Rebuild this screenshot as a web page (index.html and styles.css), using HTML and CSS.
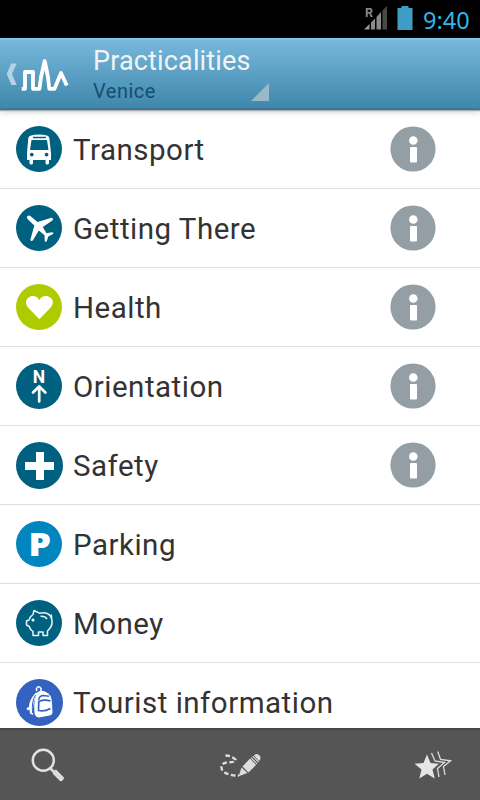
FILE: index.html
```
<!DOCTYPE html>
<html lang="en">
<head>
<meta charset="utf-8">
<title>Practicalities</title>
<link rel="stylesheet" href="styles.css">
</head>
<body>
<div class="screen">
  <div class="status">
    <svg class="signal" width="24" height="24" viewBox="0 0 24 24">
      <path d="M0 23.500L5.500 18V23.500Z" fill="#999"/>
      <path d="M7 16.500L11 12.500V23.500H7ZM12.500 11L17 6V23.500H12.500Z" fill="#8a8a8a"/>
      <path d="M18.500 4.500L23 0V23.500H18.500Z" fill="#484848"/>
      <text x="1" y="11" class="roam">R</text>
    </svg>
    <svg class="battery" width="16" height="24" viewBox="0 0 16 24"><path d="M4.500 0h7v2H15.500v22H.500V2h4z" fill="#3d9dc6"/></svg>
    <span class="clock">9:40</span>
  </div>
  <header class="bar">
    <svg class="logo" width="64" height="44" viewBox="0 0 64 44">
      <path d="M11 11.500H16.700L12 22L16.700 33H11.500L6.700 22Z" fill="#b1d3e5"/>
      <path d="M21.700 36.800H25V20H33V36.800H39.500L41 25L44.700 9L48 25L49.300 36.800H54.500L61 21L66.800 33.500" fill="none" stroke="#fff" stroke-width="3.800" stroke-linejoin="round"/>
    </svg>
    <div class="titles">
      <div class="title">Practicalities</div>
      <div class="subtitle"><span>Venice</span><svg width="18" height="18" viewBox="0 0 18 18"><path d="M18 0V18H0Z" fill="#9ab9c7"/></svg></div>
    </div>
  </header>
  <main class="list">
    <div class="row"><svg class="icon" viewBox="0 0 46 46"><circle cx="23" cy="23" r="23" fill="#006080"/><path fill="#fff" fill-rule="evenodd" d="M15 9.500Q23 7.500 31 9.500Q33 10 33.300 12L35 27V34H33V37Q33 38.500 31.300 38.500T29.500 37V34H17V37Q17 38.500 15.200 38.500T13.500 37V34H11V27L12.300 12Q12.500 10 15 9.500ZM17 10.700V12.200H30V10.700ZM15.500 14L14 24H32.500L31 14ZM15.700 26.700a1.900 1.900 0 1 0 .1 0ZM30.500 26.700a1.900 1.900 0 1 0 .1 0Z"/></svg><span class="label">Transport</span><svg class="info" viewBox="0 0 46 46"><circle cx="23" cy="23" r="22.600"/><circle class="mark" cx="23.300" cy="14.500" r="4.300"/><rect class="mark" x="20" y="21" width="7" height="15.500" rx="1"/></svg></div>
    <div class="row"><svg class="icon" viewBox="0 0 46 46"><circle cx="23" cy="23" r="23" fill="#006080"/><path fill="#fff" d="M11.200 11.200Q13 9.500 15 11.500L21.500 17L35.500 12.700Q37.500 12.800 36.700 15.200L26.800 22L30.500 28.200L36 27.200Q38.200 27.500 37 29L32.300 31.500L30.800 36Q29.300 38 28.700 35.500L28.500 30.300L22.800 25.500L17 35.200Q15.500 36.700 14.300 35L18.300 20.500L11.500 14Q10.500 12.500 11.200 11.200Z"/></svg><span class="label">Getting There</span><svg class="info" viewBox="0 0 46 46"><circle cx="23" cy="23" r="22.600"/><circle class="mark" cx="23.300" cy="14.500" r="4.300"/><rect class="mark" x="20" y="21" width="7" height="15.500" rx="1"/></svg></div>
    <div class="row"><svg class="icon" viewBox="0 0 46 46"><circle cx="23" cy="23" r="23" fill="#aecb00"/><path fill="#fff" d="M23.300 35.200L12 23.500C8.300 19 10 14 14.300 12.500C18 11.300 22 13 23.300 16.200C24.600 13 28.800 11.300 32.300 12.500C37 14 38.500 19 34.700 23.500Z"/></svg><span class="label">Health</span><svg class="info" viewBox="0 0 46 46"><circle cx="23" cy="23" r="22.600"/><circle class="mark" cx="23.300" cy="14.500" r="4.300"/><rect class="mark" x="20" y="21" width="7" height="15.500" rx="1"/></svg></div>
    <div class="row"><svg class="icon" viewBox="0 0 46 46"><circle cx="23" cy="23" r="23" fill="#006080"/><text class="north" x="23" y="19.700" text-anchor="middle">N</text><path d="M17 29.500L23.200 23.500L29.400 29.500M23.200 24V38.500" fill="none" stroke="#fff" stroke-width="2.700" stroke-linecap="round" stroke-linejoin="round"/></svg><span class="label">Orientation</span><svg class="info" viewBox="0 0 46 46"><circle cx="23" cy="23" r="22.600"/><circle class="mark" cx="23.300" cy="14.500" r="4.300"/><rect class="mark" x="20" y="21" width="7" height="15.500" rx="1"/></svg></div>
    <div class="row"><svg class="icon" viewBox="0 0 46 46"><circle cx="23.500" cy="23.500" r="23.500" fill="#006080"/><path fill="#fff" d="M20 10H28V20H38V28H28V38H20V28H9V20H20Z"/></svg><span class="label">Safety</span><svg class="info" viewBox="0 0 46 46"><circle cx="23" cy="23" r="22.600"/><circle class="mark" cx="23.300" cy="14.500" r="4.300"/><rect class="mark" x="20" y="21" width="7" height="15.500" rx="1"/></svg></div>
    <div class="row"><svg class="icon" viewBox="0 0 46 46"><circle cx="23" cy="23" r="23" fill="#0085bf"/><text class="park" x="12.600" y="35" textLength="22.500" lengthAdjust="spacingAndGlyphs">P</text></svg><span class="label">Parking</span></div>
    <div class="row"><svg class="icon" viewBox="0 0 46 46"><circle cx="23" cy="23" r="23" fill="#006080"/><g fill="none" stroke="#e8f5f8" stroke-width="1.500" stroke-linejoin="round"><path d="M18 10.500L23.500 13.200Q32 11.500 35 17Q38.500 25 31.500 31V35.500H27V32H22.500V35.500H17V31.500Q14 29.500 13.200 26.500L10.500 25V21L13 20Q13.500 17 17 14.500Z"/><path d="M24.500 16.200Q29 15.800 31 19M35.500 19Q36 15.500 35 14.500"/></g><circle cx="17" cy="20" r="1.500" fill="#fff"/></svg><span class="label">Money</span></div>
    <div class="row"><svg class="icon" viewBox="0 0 46 46"><circle cx="23.500" cy="23.500" r="23.500" fill="#3462c0"/><path d="M20.500 12V9.500Q22.500 6 25 9.500V12" fill="none" stroke="#fff" stroke-width="1.500"/><path d="M19.500 14Q13 21 13 28L10.500 29L11.500 31.500L13.500 30.500L14 34.500L17 36Q16 21 22.500 13Z" fill="#fff"/><path d="M22 13Q25 11 29 12.500Q35.500 15 36 23.500L36.500 34Q36 36 33.500 36.500L23 38.500Q19 38 18.500 34Q17 20 22 13Z" fill="#fff"/><path d="M22.500 21Q23.500 16.500 27.500 16.500L33 17.300" fill="none" stroke="#3462c0" stroke-width="1.500"/><path d="M34.500 22Q28 20 22.800 22.500L22.500 31.500Q28 33 34.500 29.500" fill="none" stroke="#3462c0" stroke-width="1.700"/><path d="M19.500 16Q15.500 22 16.500 34" fill="none" stroke="#3462c0"/></svg><span class="label">Tourist information</span></div>
  </main>
  <footer class="tools">
    <svg width="34" height="36" viewBox="31 746 34 36"><circle cx="43.300" cy="759.300" r="10.500" fill="none" stroke="#e2e2e2" stroke-width="2.500"/><path d="M50.500 767.500L53.500 770.500" stroke="#ddd" stroke-width="2.600"/><path d="M52.500 770.500L56 768.500L64 776.500Q64 779 60.500 780.500L53 773Z" fill="#ddd"/></svg>
    <svg width="42" height="26" viewBox="219 752 42 26"><path d="M225.500 755.500Q231 755.500 235.500 759.500C236 765 222 759 221.500 767C221 773 231 776 239 775.500" fill="none" stroke="#ddd" stroke-width="2.300" stroke-dasharray="4.500 2.500"/><path d="M238.700 776.300L241.500 767.500L247.500 773ZM242.500 766.500L250 758.500L256 765L248.500 772.500ZM254 755.500Q257 752.500 260 756Q261.500 758.500 259 761Z" fill="#ddd"/><path d="M251 757.700L257 763.800M252.700 756.200L258.500 762" stroke="#ddd" stroke-width="1.200"/></svg>
    <svg width="38" height="31" viewBox="414 749 38 31"><path d="M427 753.500L430.500 762L438.800 762.700L432.500 768.500L434.700 777.500L427 772.700L419.300 777.500L421.500 768.500L414.500 762.700L423.500 762Z" fill="#e5e5e5"/><path d="M431.500 752L435 760L444.500 761.500L437.500 767.500L439 776M437.800 750.500L440.500 758.500L450.500 759.800L443.500 765.500L445 774" fill="none" stroke="#ddd" stroke-width="1.300"/></svg>
  </footer>
</div>
</body>
</html>
```
FILE: styles.css
```
* { box-sizing: border-box; }
body { margin: 0; font-family: Roboto, "Liberation Sans", sans-serif; }
.screen { width: 480px; height: 800px; display: flex; flex-direction: column; overflow: hidden; background: #fff; }
.status { height: 38px; flex: none; background: #000; display: flex; align-items: flex-start; padding: 6px 9px 0 364px; }
.signal, .battery { flex: none; }
.battery { margin-left: 9px; }
.roam { font-size: 12.500px; font-weight: 700; fill: #888; }
.clock { margin-left: 10px; color: #33b5e5; font-family: "Noto Sans", sans-serif; font-size: 23.500px; line-height: 28px; white-space: nowrap; }
.bar { height: 72px; flex: none; display: flex; padding-top: 12px; background: linear-gradient(#77b8dc, #3f87ac); border-top: 2px solid #7fc5ea; border-bottom: 2px solid #397a9c; position: relative; z-index: 1; box-shadow: 0 1px 1px #aaa, 0 2px 6px rgba(0, 0, 0, .2); }
.logo { flex: none; overflow: visible; }
.titles { margin-left: 29px; margin-top: -7px; }
.title { color: #f3f3f3; font-size: 27px; line-height: 32px; letter-spacing: .15px; }
.subtitle { width: 176px; display: flex; justify-content: space-between; color: #144f70; font-size: 20px; line-height: 28px; letter-spacing: .5px; }
.subtitle svg { margin-top: 6px; }
.list { flex: 1; min-height: 0; overflow: hidden; }
.row { height: 79px; display: flex; align-items: center; padding: 0 44px 0 16px; border-bottom: 1px solid #dedede; }
.icon { width: 46px; height: 46px; flex: none; overflow: visible; }
.label { flex: 1; margin-left: 11px; padding-top: 2px; color: #333; font-size: 29.500px; line-height: 40px; letter-spacing: .5px; white-space: nowrap; }
.info { width: 46px; height: 46px; flex: none; fill: #939fa5; }
.mark { fill: #fff; }
.north { font-size: 17.500px; font-weight: 700; fill: #fff; }
.park { font-family: "Open Sans", sans-serif; font-size: 31px; font-weight: 800; fill: #fff; }
.tools { height: 72px; flex: none; display: flex; justify-content: space-between; align-items: center; padding: 0 28px 0 31px; background: #555; border-top: 2px solid #484848; }
```
